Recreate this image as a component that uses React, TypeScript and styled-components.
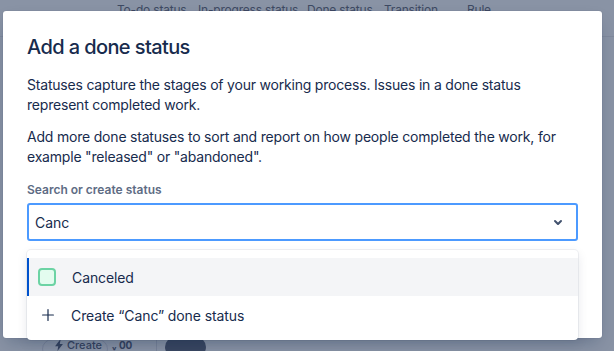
import React from 'react';
import styled, { createGlobalStyle } from 'styled-components';

const GlobalStyle = createGlobalStyle`
  html, body {
    margin: 0;
    padding: 0;
  }
  body {
    font-family: Inter, "Noto Sans", "Liberation Sans", sans-serif;
    -webkit-font-smoothing: antialiased;
  }
`;

const Page = styled.div`
  position: relative;
  width: 614px;
  height: 351px;
  overflow: hidden;
  background: #8993a5;
  display: flex;
  flex-direction: column;
  justify-content: space-between;
`;

const Tabs = styled.nav`
  height: 37px;
  box-sizing: border-box;
  border-bottom: 1px solid #7f899c;
  display: flex;
  padding-left: 117px;
`;

const Tab = styled.span<{ $w: number }>`
  width: ${(p) => p.$w}px;
  font-size: 12px;
  line-height: 12px;
  padding-top: 4px;
  letter-spacing: -0.2px;
  color: #3e4a63;
  white-space: nowrap;
`;

const Toolbar = styled.div`
  height: 12px;
  display: flex;
  align-items: flex-start;
  padding-left: 42px;
`;

const GhostButton = styled.div`
  height: 20px;
  width: 66px;
  box-sizing: border-box;
  border: 1px solid #7a8499;
  border-radius: 10px;
  padding: 0 0 0 12px;
  display: flex;
  align-items: flex-start;
  gap: 4px;
  font-size: 11px;
  line-height: 11px;
  font-weight: 500;
  color: #36435f;
`;

const GhostText = styled.span`
  margin: 1px 0 0 4px;
  font-size: 10px;
  line-height: 10px;
  font-weight: 700;
  color: #36435f;
`;

const GhostDivider = styled.div`
  width: 1px;
  height: 20px;
  background: #7a8499;
  margin: 0 8px 0 24px;
`;

const GhostPill = styled.div`
  width: 41px;
  height: 20px;
  margin-top: -2px;
  border-radius: 10px;
  background: #3a4761;
`;

const Modal = styled.section`
  position: absolute;
  left: 3px;
  top: 11px;
  width: 599px;
  height: 327px;
  box-sizing: border-box;
  background: #fff;
  border-radius: 3px;
  padding: 24px 24px 0;
  box-shadow: 0 0 1px rgba(9, 30, 66, 0.31), 0 8px 16px -4px rgba(9, 30, 66, 0.25);
  color: #172b4d;
`;

const Title = styled.h1`
  margin: 0 0 16px;
  font-size: 20px;
  line-height: 24px;
  font-weight: 500;
  letter-spacing: -0.6px;
`;

const Paragraph = styled.p`
  margin: 0 0 12px;
  font-size: 14px;
  line-height: 20px;
  letter-spacing: -0.2px;
`;

const Label = styled.label`
  display: block;
  margin: 15px 0 5px;
  font-size: 12px;
  line-height: 16px;
  font-weight: 600;
  color: #5e6c84;
`;

const Field = styled.div`
  position: relative;
`;

const Control = styled.div`
  height: 38px;
  box-sizing: border-box;
  border: 2px solid #4c9aff;
  border-radius: 3px;
  display: flex;
  align-items: center;
  padding: 0 6px 0 6px;
`;

const Value = styled.span`
  flex: 1;
  font-size: 14px;
  color: #172b4d;
`;

const Chevron = styled.span`
  display: flex;
  color: #42526e;
`;

const Menu = styled.ul`
  position: absolute;
  left: 0;
  right: 0;
  top: calc(100% + 9px);
  margin: 0;
  padding: 8px 0 6px;
  list-style: none;
  background: #fff;
  border-radius: 4px;
  box-shadow: 0 0 0 1px rgba(9, 30, 66, 0.06), 0 4px 11px rgba(9, 30, 66, 0.1);
`;

const Option = styled.li<{ $active?: boolean }>`
  height: 38px;
  box-sizing: border-box;
  display: flex;
  align-items: center;
  gap: ${(p) => (p.$active ? '16px' : '17px')};
  padding-left: ${(p) => (p.$active ? '9px' : '13px')};
  border-left: 2px solid ${(p) => (p.$active ? '#0052cc' : 'transparent')};
  background: ${(p) => (p.$active ? '#f4f5f7' : 'transparent')};
  font-size: 14px;
  letter-spacing: -0.1px;
  color: #172b4d;
`;

const StatusSwatch = styled.span`
  width: 18px;
  height: 18px;
  box-sizing: border-box;
  border: 2px solid #6cd3a4;
  border-radius: 4px;
  background: #e3fcef;
`;

const Plus = styled.span`
  display: flex;
  color: #172b4d;
`;

const ChevronDown = () => (
  <svg width="24" height="24" viewBox="0 0 24 24">
    <path
      d="M8.292 10.293a1.009 1.009 0 000 1.419l2.939 2.965c.218.215.5.322.779.322s.556-.107.769-.322l2.93-2.955a1.01 1.01 0 000-1.419.987.987 0 00-1.406 0l-2.298 2.317-2.307-2.327a.99.99 0 00-1.406 0z"
      fill="currentColor"
    />
  </svg>
);

const AddIcon = () => (
  <svg width="12" height="12" viewBox="3 3 18 18">
    <path
      d="M12.9 11.1V3.9a.9.9 0 00-1.8 0v7.2H3.9a.9.9 0 000 1.8h7.2v7.2a.9.9 0 001.8 0v-7.2h7.2a.9.9 0 000-1.8h-7.2z"
      fill="currentColor"
    />
  </svg>
);

const Bolt = () => (
  <svg width="8" height="11" viewBox="0 0 10 14">
    <path d="M6 0L0 8h4l-1 6 7-9H6l1-5z" fill="#36435f" />
  </svg>
);

const tabs = [
  { label: 'To-do status', w: 81 },
  { label: 'In-progress status', w: 109 },
  { label: 'Done status', w: 77 },
  { label: 'Transition', w: 83 },
  { label: 'Rule', w: 40 },
];

const App = () => {
  return (
    <Page>
      <GlobalStyle />
      <Tabs>
        {tabs.map((t) => (
          <Tab key={t.label} $w={t.w}>
            {t.label}
          </Tab>
        ))}
      </Tabs>
      <Toolbar>
        <GhostButton>
          <Bolt />
          Create
        </GhostButton>
        <GhostText>ᵥ 00</GhostText>
        <GhostDivider />
        <GhostPill />
      </Toolbar>

      <Modal>
        <Title>Add a done status</Title>
        <Paragraph>
          Statuses capture the stages of your working process. Issues in a done status represent
          completed work.
        </Paragraph>
        <Paragraph>
          Add more done statuses to sort and report on how people completed the work, for example
          "released" or "abandoned".
        </Paragraph>
        <Label>Search or create status</Label>
        <Field>
          <Control>
            <Value>Canc</Value>
            <Chevron>
              <ChevronDown />
            </Chevron>
          </Control>
          <Menu>
            <Option $active>
              <StatusSwatch />
              Canceled
            </Option>
            <Option>
              <Plus>
                <AddIcon />
              </Plus>
              Create “Canc” done status
            </Option>
          </Menu>
        </Field>
      </Modal>
    </Page>
  );
};

export default App;
